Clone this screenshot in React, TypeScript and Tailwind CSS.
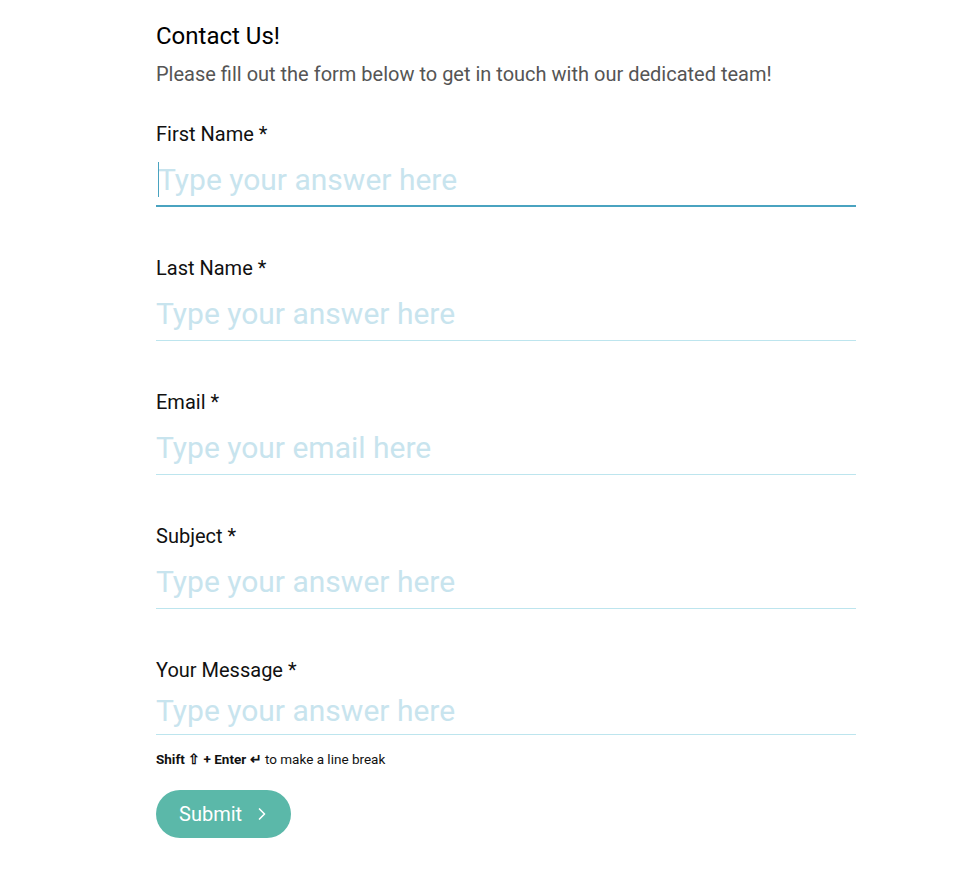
import { ChevronRight } from 'lucide-react'

const FIELDS = [
  { label: 'First Name *', placeholder: 'Type your answer here', focused: true },
  { label: 'Last Name *', placeholder: 'Type your answer here' },
  { label: 'Email *', placeholder: 'Type your email here' },
  { label: 'Subject *', placeholder: 'Type your answer here' },
]

export default function App() {
  return (
    <div className="min-h-screen bg-white font-['Roboto',sans-serif]">
      <div className="w-[700px] ml-[156px] pt-5">
        {/* Header */}
        <h1 className="text-[24px] leading-8 text-black">Contact Us!</h1>
        <p className="mt-2 text-[20px] leading-7 text-[#555]">
          Please fill out the form below to get in touch with our dedicated team!
        </p>

        <form className="mt-8" onSubmit={(e) => e.preventDefault()}>
          {FIELDS.map((f) => (
            <div key={f.label} className="mb-[47px]">
              <label className="block text-[20px] leading-7 text-[#111]">{f.label}</label>
              <div
                className={`relative mt-[7px] box-border h-[52px] ${
                  f.focused ? 'border-b-2 border-[#4aa3c0]' : 'border-b border-[#bde5ee]'
                }`}
              >
                {f.focused && (
                  <span className="absolute left-[2px] top-[7px] h-[35px] w-px bg-[#4aa3c0]" />
                )}
                <input
                  type="text"
                  placeholder={f.placeholder}
                  className={`block h-full w-full border-0 bg-transparent pb-0.5 text-[30px] outline-none placeholder:text-[#c8e4ee] ${
                    f.focused ? 'pl-0.5' : ''
                  }`}
                />
              </div>
            </div>
          ))}

          {/* Message */}
          <div>
            <label className="block text-[20px] leading-7 text-[#111]">Your Message *</label>
            <div className="mt-1.5 box-border h-[45px] border-b border-[#bde5ee]">
              <textarea
                rows={1}
                placeholder="Type your answer here"
                className="block h-full w-full resize-none border-0 bg-transparent pt-[2px] text-[30px] leading-[38px] outline-none placeholder:text-[#c8e4ee]"
              />
            </div>
            <p className="mt-[15px] text-[13.5px] leading-[18px] text-[#111]">
              <span className="font-bold">Shift ⇧ + Enter ↵</span> to make a line break
            </p>
          </div>

          <button
            type="submit"
            className="mt-[22px] flex h-12 w-[135px] items-center rounded-full bg-[#5bb8a9] pl-[23px] text-[20px] text-white"
          >
            Submit
            <ChevronRight className="ml-[10px] h-5 w-5" strokeWidth={2} />
          </button>
        </form>
      </div>
    </div>
  )
}
